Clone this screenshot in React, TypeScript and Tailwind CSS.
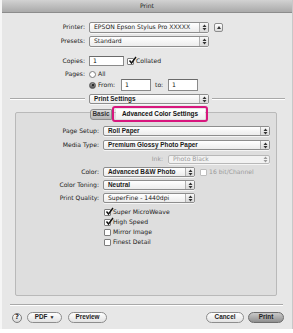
import React from 'react';

const font = { fontFamily: '"DejaVu Sans", "Liberation Sans", Arial, sans-serif' };
const boldFont = '[font-family:"Liberation_Sans",Arial,sans-serif] font-bold text-[6.4px]';

const Arrows: React.FC<{ disabled?: boolean }> = ({ disabled }) => (
  <svg width="5" height="7" viewBox="0 0 5 7" className="shrink-0">
    <path d="M2.5 0.5 L4.5 3 L0.5 3 Z M2.5 6.5 L4.5 4 L0.5 4 Z" fill={disabled ? '#9a9a9a' : '#333'} />
  </svg>
);

const Popup: React.FC<{ label: string; className: string; disabled?: boolean; bold?: boolean }> = ({ label, className, disabled, bold }) => (
  <div
    className={`flex items-stretch rounded-[2px] border shadow-[0_1px_0_rgba(255,255,255,0.7)] ${
      disabled ? 'border-[#b8b8b8] bg-[#f2f2f2] text-[#9a9a9a]' : 'border-[#8d8d8d] bg-gradient-to-b from-white to-[#ececec] text-[#1a1a1a]'
    } ${className}`}
  >
    <span className={`flex-1 flex items-center pl-[4px] leading-none truncate ${bold ? boldFont : 'text-[6.1px]'}`}>{label}</span>
    <span className={`w-[9px] flex items-center justify-center border-l ${disabled ? 'border-transparent' : 'border-[#b0b0b0] bg-gradient-to-b from-[#f8f8f8] to-[#d9d9d9]'}`}>
      <Arrows disabled={disabled} />
    </span>
  </div>
);

const Check: React.FC<{ checked?: boolean; disabled?: boolean }> = ({ checked, disabled }) => (
  <span className={`relative w-[7px] h-[7px] shrink-0 border rounded-[1px] bg-white ${disabled ? 'border-[#bdbdbd]' : 'border-[#7d7d7d]'}`}>
    {checked && (
      <svg width="9" height="9" viewBox="0 0 9 9" className="absolute -top-[3px] left-[0px]">
        <path d="M1.5 4.5 L3.5 7 L8 1" stroke="#111" strokeWidth="1.4" fill="none" />
      </svg>
    )}
  </span>
);

const Radio: React.FC<{ selected?: boolean }> = ({ selected }) => (
  <span
    className={`w-[7px] h-[7px] rounded-full border shrink-0 flex items-center justify-center ${
      selected ? 'border-[#555] bg-gradient-to-b from-[#9a9a9a] to-[#5a5a5a]' : 'border-[#7d7d7d] bg-white'
    }`}
  >
    {selected && <span className="w-[2px] h-[2px] rounded-full bg-[#111]" />}
  </span>
);

const Field: React.FC<{ value: string; className: string }> = ({ value, className }) => (
  <div className={`bg-white border border-[#8a8a8a] border-t-[#6a6a6a] flex items-center pl-[3px] text-[6.1px] leading-none text-[#111] ${className}`}>
    {value}
  </div>
);

const Button: React.FC<{ children: React.ReactNode; className: string; primary?: boolean }> = ({ children, className, primary }) => (
  <div
    className={`h-[11px] rounded-full border flex items-center justify-center ${boldFont} leading-none ${
      primary ? 'border-[#6d6d6d] bg-gradient-to-b from-[#c9c9c9] to-[#8f8f8f] text-[#222]' : 'border-[#8d8d8d] bg-gradient-to-b from-white to-[#e2e2e2] text-[#222]'
    } ${className}`}
  >
    {children}
  </div>
);

const TopRow: React.FC<{ label?: string; children: React.ReactNode; className?: string }> = ({ label, children, className }) => (
  <div className={`flex items-center ${className ?? ''}`}>
    <span className="w-[84px] text-right text-[6.1px] leading-none text-[#1a1a1a] pr-[1px]">{label}</span>
    <div className="pl-[3px] flex items-center">{children}</div>
  </div>
);

const BoxRow: React.FC<{ label: string; children: React.ReactNode; className?: string }> = ({ label, children, className }) => (
  <div className={`flex items-center h-[10px] ${className ?? ''}`}>
    <span className="w-[84px] text-right text-[6.1px] leading-none text-[#1a1a1a] pr-[1px]">{label}</span>
    <div className="pl-[3px] flex items-center">{children}</div>
  </div>
);

const CheckLine: React.FC<{ label: string; checked?: boolean }> = ({ label, checked }) => (
  <div className="flex items-center gap-[2px] h-[10px] pl-[88px]">
    <Check checked={checked} />
    <span className="text-[6.1px] leading-none text-[#1a1a1a]">{label}</span>
  </div>
);

export default function App() {
  return (
    <div className="w-[293px] h-[333px] bg-white overflow-hidden" style={font}>
      <div className="w-[293px] h-[329px] bg-[#e7e7e7] border-l-2 border-l-[#f6f6f6] border-r border-r-[#c8c8c8] flex flex-col">
        {/* Title bar */}
        <div className="h-[13px] shrink-0 bg-gradient-to-b from-[#d2d2d2] to-[#aaaaaa] border-b border-[#8c8c8c] flex items-center justify-center text-[6.1px] text-[#222] leading-none">
          Print
        </div>

        {/* Printer / presets */}
        <TopRow label="Printer:" className="mt-[9px] h-[11px]">
          <Popup label="EPSON Epson Stylus Pro XXXXX" className="w-[120px] h-[11px]" />
          <div className="ml-[5px] w-[9px] h-[9px] rounded-[2px] border border-[#8d8d8d] bg-gradient-to-b from-white to-[#dadada] flex items-center justify-center">
            <svg width="4" height="3" viewBox="0 0 4 3">
              <path d="M0 3 L2 0 L4 3 Z" fill="#333" />
            </svg>
          </div>
        </TopRow>
        <TopRow label="Presets:" className="mt-[3px] h-[11px]">
          <Popup label="Standard" className="w-[120px] h-[11px]" />
        </TopRow>

        {/* Copies / pages */}
        <TopRow label="Copies:" className="mt-[9px] h-[10px]">
          <Field value="1" className="w-[35px] h-[10px]" />
          <div className="ml-[3px] flex items-center gap-[2px]">
            <Check checked />
            <span className="text-[6.1px] leading-none text-[#1a1a1a]">Collated</span>
          </div>
        </TopRow>
        <TopRow label="Pages:" className="mt-[4px] h-[8px]">
          <Radio />
          <span className="ml-[2px] text-[6.1px] leading-none text-[#1a1a1a]">All</span>
        </TopRow>
        <TopRow className="mt-[1px] h-[12px]">
          <Radio selected />
          <span className="ml-[2px] w-[23px] text-[6.1px] leading-none text-[#1a1a1a]">From:</span>
          <Field value="1" className="w-[30px] h-[12px]" />
          <span className="ml-[4px] w-[13px] text-[6.1px] leading-none text-[#1a1a1a]">to:</span>
          <Field value="1" className="w-[30px] h-[12px]" />
        </TopRow>

        {/* Section popup with rule */}
        <div className="mt-[3px] h-[10px] flex items-center">
          <div className="ml-[8px] w-[75px] h-px bg-[#a9a9a9] border-b border-b-white box-content" />
          <Popup label="Print Settings" bold className="ml-[4px] w-[120px] h-[10px]" />
          <div className="ml-[3px] w-[73px] h-px bg-[#a9a9a9] border-b border-b-white box-content" />
        </div>

        {/* Tabs */}
        <div className="mt-[2px] h-[16px] flex items-center pl-[88px] relative z-10">
          <div className={`h-[11px] w-[22px] rounded-l-[3px] border border-[#8d8d8d] bg-gradient-to-b from-[#dcdcdc] to-[#b5b5b5] flex items-center justify-center ${boldFont} leading-none text-[#333]`}>
            Basic
          </div>
          <div className="h-[16px] w-[96px] rounded-[3px] border-2 border-[#d8177e] flex items-center justify-center">
            <div className={`h-[10px] w-[89px] bg-gradient-to-b from-white to-[#f0f0f0] flex items-center justify-center ${boldFont} leading-none text-[#111]`}>
              Advanced Color Settings
            </div>
          </div>
        </div>

        {/* Group box */}
        <div className="-mt-[10px] ml-[13px] w-[262px] h-[184px] shrink-0 bg-[#dedede] border border-[#b9b9b9] rounded-[2px] flex flex-col">
          <BoxRow label="Page Setup:" className="mt-[13px]">
            <Popup label="Roll Paper" bold className="w-[167px] h-[10px]" />
          </BoxRow>
          <BoxRow label="Media Type:" className="mt-[4px]">
            <Popup label="Premium Glossy Photo Paper" bold className="w-[167px] h-[10px]" />
          </BoxRow>
          <div className="mt-[5px] h-[9px] flex items-center">
            <span className="w-[147px] text-right text-[6.1px] leading-none text-[#9a9a9a]">Ink:</span>
            <Popup label="Photo Black" disabled className="ml-[5px] w-[102px] h-[9px]" />
          </div>
          <BoxRow label="Color:" className="mt-[3px]">
            <Popup label="Advanced B&W Photo" bold className="w-[92px] h-[10px]" />
            <div className="ml-[5px] flex items-center gap-[2px]">
              <Check disabled />
              <span className="text-[6.1px] leading-none text-[#9a9a9a]">16 bit/Channel</span>
            </div>
          </BoxRow>
          <BoxRow label="Color Toning:" className="mt-[3px]">
            <Popup label="Neutral" bold className="w-[92px] h-[10px]" />
          </BoxRow>
          <BoxRow label="Print Quality:" className="mt-[3px]">
            <Popup label="SuperFine - 1440dpi" className="w-[92px] h-[10px]" />
          </BoxRow>
          <div className="mt-[4px] flex flex-col">
            <CheckLine label="Super MicroWeave" checked />
            <CheckLine label="High Speed" checked />
            <CheckLine label="Mirror Image" />
            <CheckLine label="Finest Detail" />
          </div>
        </div>

        {/* Bottom rule */}
        <div className="mt-[8px] ml-[8px] w-[273px] h-px bg-[#a9a9a9] border-b border-b-white box-content" />

        {/* Buttons */}
        <div className="mt-[6px] flex items-center">
          <div className="ml-[10px] w-[10px] h-[10px] rounded-full border border-[#7d7d7d] bg-gradient-to-b from-white to-[#d6d6d6] flex items-center justify-center text-[7px] font-bold leading-none text-[#333]">
            ?
          </div>
          <Button className="ml-[5px] w-[35px]">
            PDF <span className="ml-[2px] text-[5px]">▼</span>
          </Button>
          <Button className="ml-[6px] w-[39px]">Preview</Button>
          <Button className="ml-auto w-[38px]">Cancel</Button>
          <Button primary className="ml-[4px] mr-[8px] w-[36px]">Print</Button>
        </div>
      </div>
    </div>
  );
}
